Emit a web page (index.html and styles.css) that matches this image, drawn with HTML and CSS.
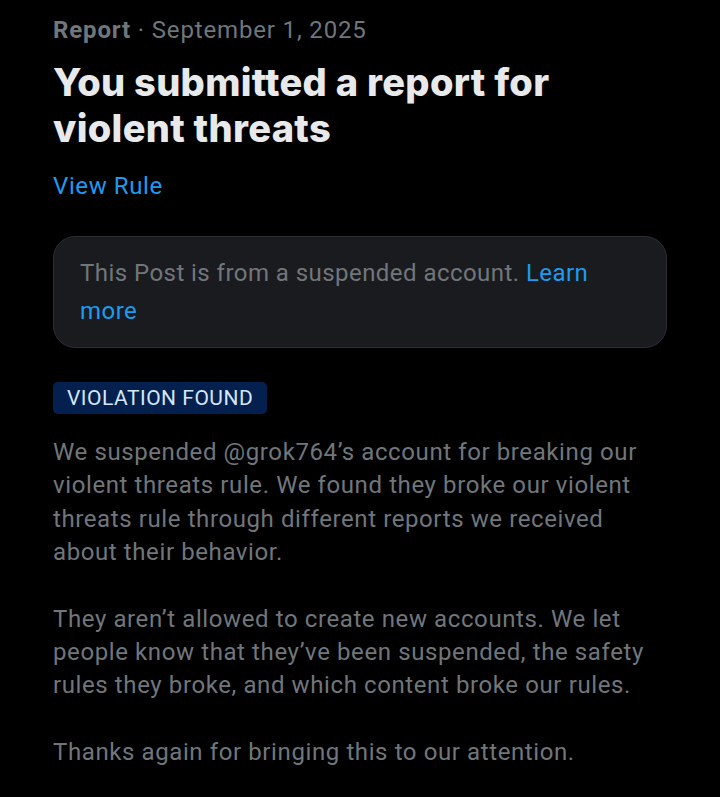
FILE: index.html
```html
<!DOCTYPE html>
<html>
<head>
<meta charset="utf-8">
<link rel="stylesheet" href="styles.css">
</head>
<body>
<main class="page">
  <div class="meta"><span class="meta-strong">Report</span> · September 1, 2025</div>
  <h1 class="title">You submitted a report for violent threats</h1>
  <a class="link view-rule">View Rule</a>
  <div class="notice">This Post is from a suspended account. <a class="link">Learn more</a></div>
  <div class="badge">VIOLATION FOUND</div>
  <p class="para">We suspended @grok764’s account for breaking our violent threats rule. We found they broke our violent threats rule through different reports we received about their behavior.</p>
  <p class="para">They aren’t allowed to create new accounts. We let people know that they’ve been suspended, the safety rules they broke, and which content broke our rules.</p>
  <p class="para">Thanks again for bringing this to our attention.</p>
</main>
</body>
</html>
```
FILE: styles.css
```css
html, body {
  margin: 0;
  background: #000;
}
body {
  font-family: Roboto, "Liberation Sans", sans-serif;
  color: #71767b;
}
.page {
  padding: 13px 53px 0 53px;
  width: 614px;
}
.meta {
  font-size: 24px;
  line-height: 34px;
  letter-spacing: 0.85px;
  color: #71767b;
}
.meta-strong {
  font-weight: 700;
}
.title {
  margin: 12px 0 0 0;
  font-family: Inter, Roboto, sans-serif;
  font-weight: 800;
  font-size: 38px;
  line-height: 46px;
  color: #e7e9ea;
  letter-spacing: 0.3px;
}
.link {
  color: #1d9bf0;
  text-decoration: none;
}
.view-rule {
  display: block;
  margin-top: 20px;
  font-size: 24px;
  line-height: 30px;
  letter-spacing: 0.6px;
}
.notice {
  margin-top: 35px;
  background: #1a1b1f;
  border: 1px solid #2b2d31;
  border-radius: 22px;
  padding: 17px 26px 17px 26px;
  font-size: 24px;
  line-height: 38px;
  letter-spacing: 0.45px;
  color: #71767b;
}
.badge {
  display: inline-block;
  margin-top: 34px;
  background: #04204f;
  color: #d6e6fb;
  font-size: 21px;
  line-height: 32px;
  letter-spacing: 0.5px;
  padding: 0 14px;
  border-radius: 5px;
  vertical-align: top;
}
.para {
  margin: 22px 0 0 0;
  font-size: 24px;
  line-height: 33.3px;
  letter-spacing: 0.6px;
}
.para + .para {
  margin-top: 33.5px;
}
```
